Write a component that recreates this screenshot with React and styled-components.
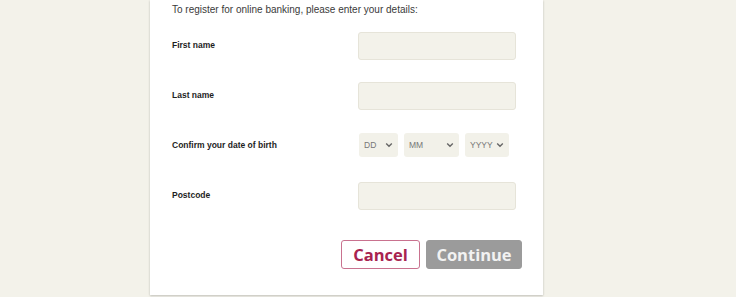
import React from 'react';
import styled, { createGlobalStyle } from 'styled-components';

const GlobalStyle = createGlobalStyle`
  html, body {
    margin: 0;
    padding: 0;
    background-color: #f3f2ea;
    font-family: "Liberation Sans", Arial, sans-serif;
  }
`;

const Page = styled.div`
  width: 736px;
  height: 297px;
  overflow: hidden;
  background-color: #f3f2ea;
`;

const Card = styled.div`
  margin-left: 150px;
  width: 393px;
  height: 295px;
  box-sizing: border-box;
  background-color: #fff;
  padding: 3px 21px 0 22px;
  box-shadow: 0 1px 2px rgba(0, 0, 0, 0.18), 0 0 3px rgba(0, 0, 0, 0.06);
`;

const Intro = styled.p`
  margin: 0 0 15px;
  font-size: 10px;
  line-height: 14px;
  color: #3a3a3a;
`;

const Row = styled.div`
  display: flex;
  align-items: center;
  height: 28px;
  margin-bottom: 22px;
`;

const Label = styled.label`
  width: 186px;
  padding-bottom: 3px;
  font-size: 8.5px;
  font-weight: bold;
  color: #1e1e1e;
`;

const Input = styled.div`
  width: 158px;
  height: 28px;
  box-sizing: border-box;
  background-color: #f3f2ea;
  border: 1px solid #e6e4d9;
  border-radius: 3px;
`;

const Selects = styled.div`
  display: flex;
  gap: 6px;
  padding-left: 1px;
  padding-bottom: 2px;
`;

const Select = styled.div`
  display: flex;
  align-items: center;
  justify-content: space-between;
  width: ${(p) => p.w}px;
  height: 24px;
  box-sizing: border-box;
  padding: 0 5px 0 5px;
  background-color: #f2f1e9;
  border-radius: 3px;
  font-size: 8.5px;
  color: #777;
`;

const Actions = styled.div`
  display: flex;
  justify-content: flex-end;
  gap: 6px;
  margin-top: 30px;
`;

const Button = styled.button`
  height: 29px;
  width: ${(p) => p.w}px;
  box-sizing: border-box;
  border-radius: 3px;
  font-family: "Open Sans", sans-serif;
  font-weight: 700;
  font-size: 16.5px;
  padding: 0;
  cursor: pointer;
  background-color: ${(p) => (p.primary ? '#9b9b9b' : '#fff')};
  color: ${(p) => (p.primary ? '#f2f2f2' : '#a8234f')};
  border: 1px solid ${(p) => (p.primary ? '#9b9b9b' : '#c9728f')};
`;

const Chevron = () => (
  <svg width="8" height="6" viewBox="0 0 8 6">
    <path d="M1.2 1.5 L4 4.3 L6.8 1.5" fill="none" stroke="#666" strokeWidth="1.4" />
  </svg>
);

const fields = ['First name', 'Last name'];

function App() {
  return (
    <Page>
      <GlobalStyle />
      <Card>
        <Intro>To register for online banking, please enter your details:</Intro>
        {fields.map((f) => (
          <Row key={f}>
            <Label>{f}</Label>
            <Input />
          </Row>
        ))}
        <Row>
          <Label>Confirm your date of birth</Label>
          <Selects>
            <Select w={39}>DD<Chevron /></Select>
            <Select w={55}>MM<Chevron /></Select>
            <Select w={44}>YYYY<Chevron /></Select>
          </Selects>
        </Row>
        <Row>
          <Label>Postcode</Label>
          <Input />
        </Row>
        <Actions>
          <Button w={79}>Cancel</Button>
          <Button w={96} primary>Continue</Button>
        </Actions>
      </Card>
    </Page>
  );
}

export default App;
